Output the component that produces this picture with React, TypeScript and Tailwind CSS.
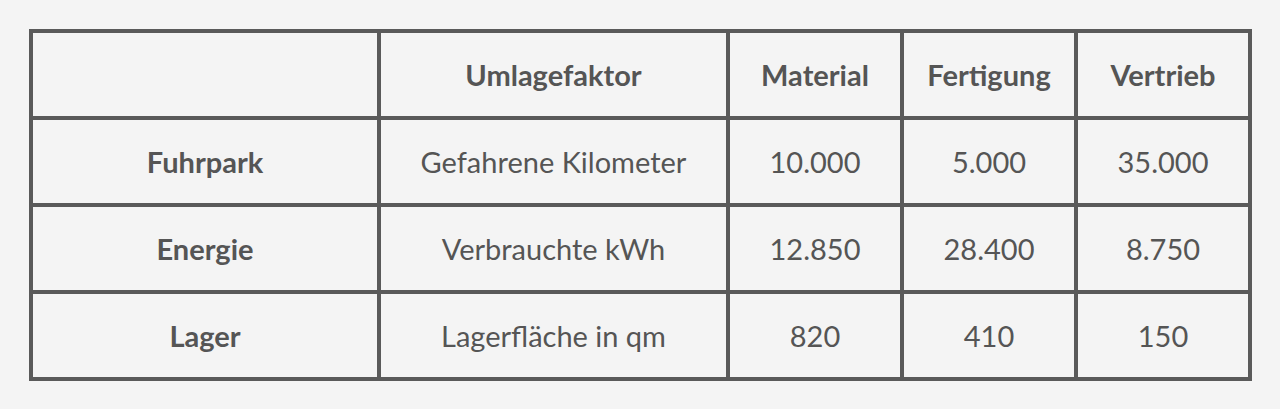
import React from "react";

const header = ["", "Umlagefaktor", "Material", "Fertigung", "Vertrieb"];
const rows = [
  ["Fuhrpark", "Gefahrene Kilometer", "10.000", "5.000", "35.000"],
  ["Energie", "Verbrauchte kWh", "12.850", "28.400", "8.750"],
  ["Lager", "Lagerfläche in qm", "820", "410", "150"],
];

export default function App() {
  return (
    <div
      className="w-[1280px] h-[409px] bg-[#f4f4f4] pt-[29px] pl-[29px]"
      style={{ fontFamily: "Lato, 'Noto Sans', sans-serif" }}
    >
      <div className="w-[1223px] grid grid-cols-[344px_345px_170px_170px_170px] gap-[4px] p-[4px] bg-[#5a5a5a] text-[#555555] text-[29px] leading-none">
        {header.map((h, i) => (
          <div key={"h" + i} className="h-[83px] bg-[#f4f4f4] flex items-center justify-center font-bold">
            {h}
          </div>
        ))}
        {rows.map((r, ri) =>
          r.map((c, ci) => (
            <div
              key={ri + "-" + ci}
              className={
                "h-[83px] bg-[#f4f4f4] flex items-center justify-center " +
                (ci === 0 ? "font-bold" : "font-normal")
              }
            >
              {c}
            </div>
          ))
        )}
      </div>
    </div>
  );
}
